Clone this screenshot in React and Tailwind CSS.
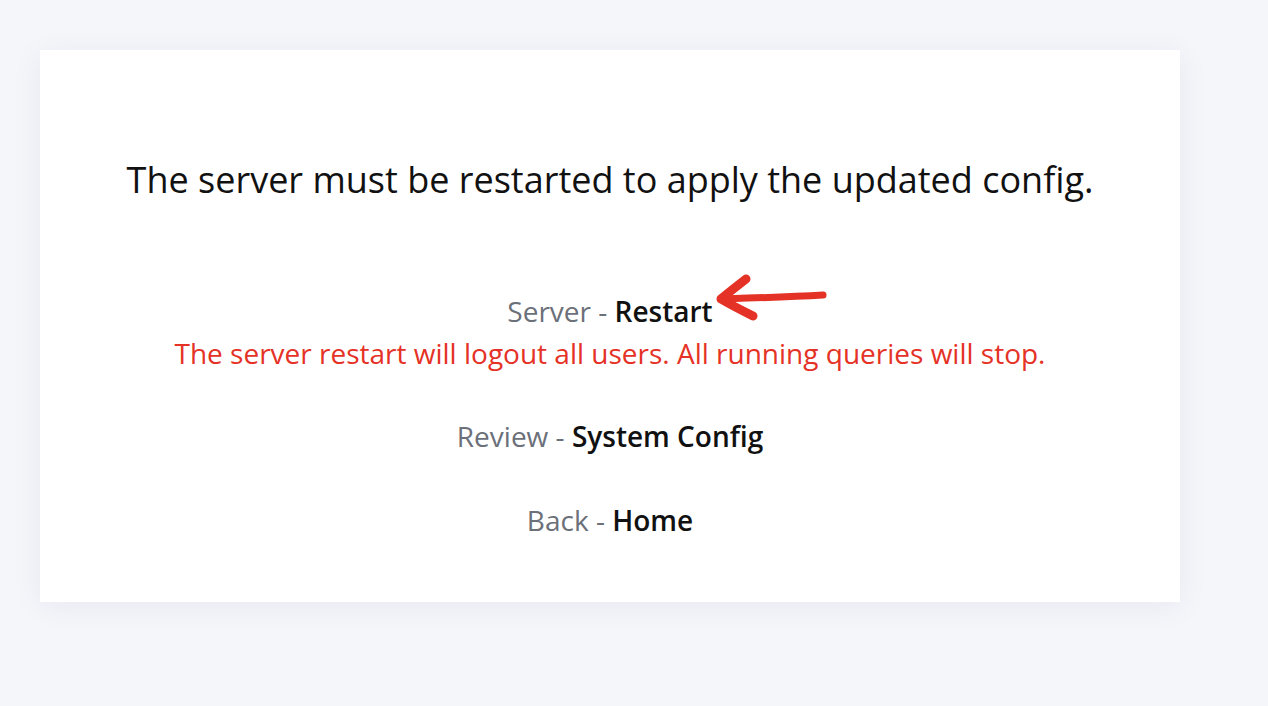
import React from 'react';

const Arrow = () => (
    <svg
        className="absolute left-0 top-[-20px]"
        width="118"
        height="52"
        viewBox="0 0 118 52"
        fill="none"
    >
        <path
            d="M8 27 C 40 26, 75 25, 110 23"
            stroke="#e53226"
            strokeWidth="7"
            strokeLinecap="round"
        />
        <path
            d="M33 7 C 24 14, 15 21, 8 27 C 18 33, 30 39, 40 44"
            stroke="#e53226"
            strokeWidth="9"
            strokeLinecap="round"
            strokeLinejoin="round"
        />
    </svg>
);

const Row = ({ label, target, children }) => (
    <div className="text-[28px] leading-[32px]">
        <span className="text-[#6b7079]">{label} - </span>
        <span className="relative font-semibold text-[#111]">
            {target}
            {children}
        </span>
    </div>
);

const App = () => {
    return (
        <div
            className="min-h-[706px] w-full bg-[#f5f6fa] pt-[50px] pl-[40px]"
            style={{ fontFamily: '"Open Sans", sans-serif' }}
        >
            <div className="w-[1140px] h-[552px] bg-white shadow-[0_4px_30px_rgba(30,40,80,0.06)] flex flex-col items-center pt-[110px]">
                <h1 className="text-[36px] leading-[40px] text-[#111]">
                    The server must be restarted to apply the updated config.
                </h1>

                <div className="mt-[95px] flex flex-col items-center">
                    <Row label="Server" target="Restart">
                        <span className="absolute left-full top-0">
                            <Arrow />
                        </span>
                    </Row>
                    <div className="mt-[10px] text-[28px] leading-[32px] text-[#e53226]">
                        The server restart will logout all users. All running queries will stop.
                    </div>
                </div>

                <div className="mt-[51px]">
                    <Row label="Review" target="System Config" />
                </div>
                <div className="mt-[52px]">
                    <Row label="Back" target="Home" />
                </div>
            </div>
        </div>
    );
};

export default App;
